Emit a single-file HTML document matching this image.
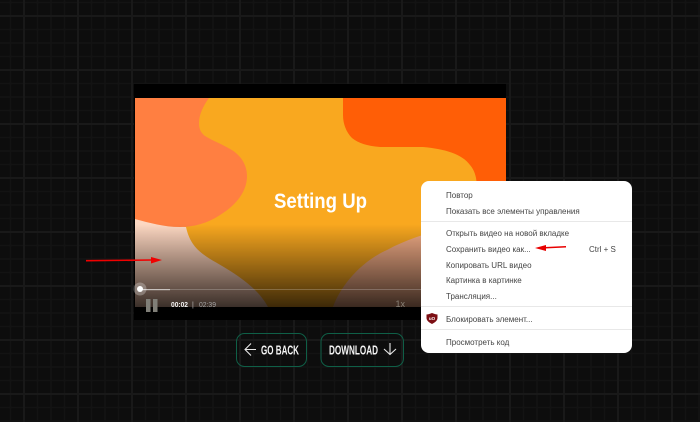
<!DOCTYPE html>
<html><head><meta charset="utf-8"><style>
html,body{margin:0;padding:0;width:700px;height:422px;overflow:hidden;background:#0d0d0d}
svg{display:block;position:absolute;left:0;top:0}
#menu{position:absolute;left:421px;top:181px;width:211px;height:172px;background:#fff;border-radius:8px;font-family:"Liberation Sans",sans-serif;font-size:8px;color:#444}
#menu div.i{position:absolute;left:25px;line-height:12px;white-space:nowrap}
#menu div.s{position:absolute;left:0;right:0;height:1.5px;background:#e8e8e8}
</style></head><body>
<svg width="700" height="422" viewBox="0 0 700 422">
<defs>
<pattern id="grid" x="23" y="15" width="54" height="54" patternUnits="userSpaceOnUse">
<path d="M14.500 0V54M28 0V54M41.500 0V54M0 14.500H54M0 28H54M0 41.500H54" stroke="#131313" stroke-width="1.5" fill="none"/>
<path d="M1 0V54M0 1H54" stroke="#191919" stroke-width="2" fill="none"/>
</pattern>
<linearGradient id="g" x1="0" y1="0" x2="0" y2="1">
<stop offset="0" stop-color="#000" stop-opacity="0"/>
<stop offset="1" stop-color="#000" stop-opacity=".76"/>
</linearGradient>
<linearGradient id="p" x1="0" y1="0" x2="0" y2="1">
<stop offset="0" stop-color="#fdd9c4"/>
<stop offset="1" stop-color="#f4c4ab"/>
</linearGradient>
<clipPath id="c"><rect x="135" y="98" width="371" height="209"/></clipPath>
</defs>
<rect width="700" height="422" fill="#0d0d0d"/>
<rect width="700" height="422" fill="url(#grid)"/>
<rect x="134" y="84" width="372" height="236" fill="#000"/>
<g clip-path="url(#c)">
<rect x="135" y="98" width="371" height="209" fill="#f9a81f"/>
<path d="M135 219V307H268C260 292 245 279 217 263C199 253 190 245 186 227L160 224Z" fill="url(#p)"/>
<path d="M333 307C340 287 360 262 387 250C405 240 425 234 445 228C470 222 490 220 506 218V307Z" fill="#f1ab85"/>
<path d="M135 98H209C203 106 199 115 199 123C199 129 201 133 205 136C213 141 222 144 230 149C241 155 247 165 247 176C247 190 238 204 220 215C208 223 194 227 180 227C164 227 150 223 135 219Z" fill="#ff7f41"/>
<path d="M343 98V115C343 125 347 133 352 138C358 143 367 146 380 147H423C445 149 462 154 470 165C475 171 477 178 477 190H506V98Z" fill="#ff5e06"/>
<text x="274" y="208" font-family="Liberation Sans,sans-serif" font-size="21" font-weight="700" fill="#fff" textLength="93" lengthAdjust="spacingAndGlyphs">Setting Up</text>
<rect x="135" y="224" width="371" height="83" fill="url(#g)"/>
<rect x="170" y="289" width="336" height="1" fill="#fff" fill-opacity=".22"/>
</g>
<rect x="140" y="289" width="30" height="1.2" fill="#fff" fill-opacity=".65"/>
<circle cx="140" cy="289" r="6.5" fill="#fff" fill-opacity=".28"/>
<circle cx="140" cy="289" r="3" fill="#fff"/>
<rect x="146" y="299" width="4.500" height="13" fill="#807f78"/>
<rect x="153" y="299" width="4.500" height="13" fill="#807f78"/>
<g font-family="Liberation Sans,sans-serif" font-size="7">
<text x="171" y="307" font-weight="700" fill="#f2f2f2" textLength="17" lengthAdjust="spacingAndGlyphs">00:02</text>
<text x="192" y="307" fill="#bbb">|</text>
<text x="199" y="307" fill="#a5a5a5" textLength="17" lengthAdjust="spacingAndGlyphs">02:39</text>
<text x="395.500" y="307" font-size="9" fill="#8a8378">1x</text>
</g>
<path d="M86 260.700L152 260" stroke="#f00000" stroke-width="1.6" fill="none"/>
<path d="M162 260L151 257V263.500Z" fill="#f00000"/>
<rect x="236.500" y="333.500" width="70" height="33" rx="8" fill="none" stroke="#0f5f47" stroke-width="1"/>
<rect x="321" y="333.500" width="82.500" height="33" rx="8" fill="none" stroke="#0f5f47" stroke-width="1"/>
<path d="M256 349.500H245M251 343.500L245 349.500L251 355.500" stroke="#e8e8e8" stroke-width="1.100" fill="none"/>
<path d="M390 343V354M384 349L390 354.500L396 349" stroke="#e8e8e8" stroke-width="1.100" fill="none"/>
<g font-family="Liberation Sans,sans-serif" font-size="13" font-weight="700" fill="#f5f5f5">
<text x="261" y="354.500" textLength="38" lengthAdjust="spacingAndGlyphs">GO BACK</text>
<text x="329" y="354.500" textLength="49" lengthAdjust="spacingAndGlyphs">DOWNLOAD</text>
</g>
</svg>
<div id="menu">
<div class="i" style="top:9px">Повтор</div>
<div class="i" style="top:25px">Показать все элементы управления</div>
<div class="s" style="top:39.500px"></div>
<div class="i" style="top:47px">Открыть видео на новой вкладке</div>
<div class="i" style="top:63px">Сохранить видео как...</div>
<div class="i" style="top:63px;left:168px">Ctrl + S</div>
<div class="i" style="top:79px">Копировать URL видео</div>
<div class="i" style="top:94px">Картинка в картинке</div>
<div class="i" style="top:110px">Трансляция...</div>
<div class="s" style="top:124.500px"></div>
<div class="i" style="top:133px">Блокировать элемент...</div>
<div class="s" style="top:147.500px"></div>
<div class="i" style="top:156px">Просмотреть код</div>
</div>
<svg width="700" height="422" viewBox="0 0 700 422">
<path d="M566 246.800L545 247.800" stroke="#e80000" stroke-width="1.500" fill="none"/>
<path d="M535 248L546 245V251Z" fill="#e80000"/>
<path d="M432 313C434.500 314 436 314.500 437.500 314.500V318C437.500 320.500 435 322.500 432 324C429 322.500 426.500 320.500 426.500 318V314.500C428 314.500 429.500 314 432 313Z" fill="#7c0f14"/>
<text x="432" y="320" text-anchor="middle" font-family="Liberation Sans,sans-serif" font-size="4.500" font-weight="700" fill="#fff">uO</text>
</svg>
</body></html>
